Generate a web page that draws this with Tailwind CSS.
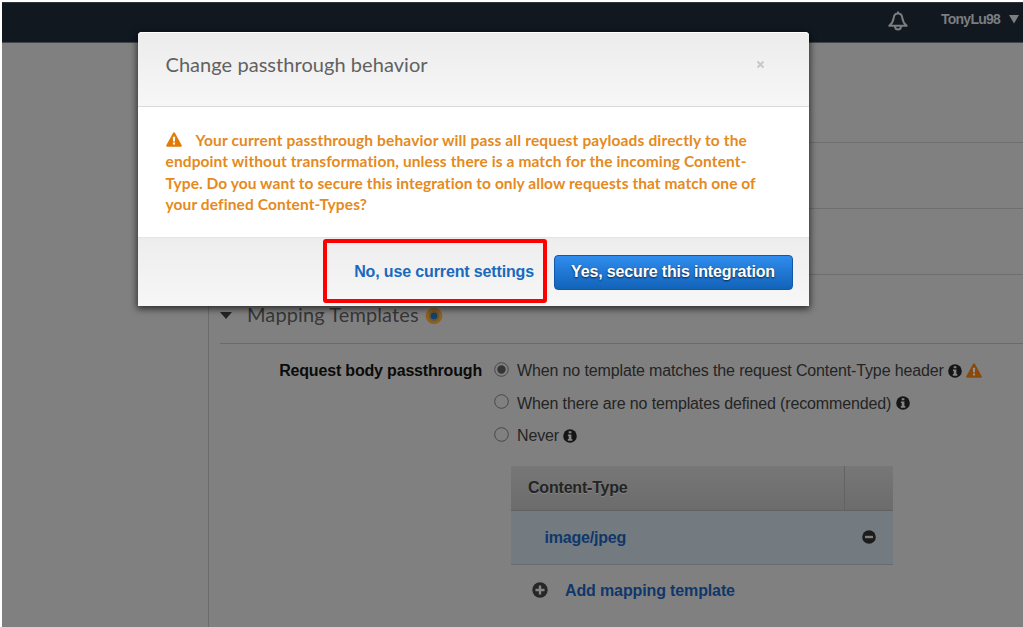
<!DOCTYPE html>
<html lang="en">
<head>
<meta charset="utf-8">
<title>Change passthrough behavior</title>
<script src="https://cdn.jsdelivr.net/npm/@tailwindcss/browser@4"></script>
</head>
<body class="w-[1023px] h-[627px] overflow-hidden bg-white font-['Liberation_Sans',sans-serif]">
<svg class="hidden">
  <symbol id="info" viewBox="0 0 14 14"><circle cx="7" cy="7" r="6.8" fill="#151515"/><path d="M5.7 2.2h2.7v2H5.7zM4.9 5.4h3.5v4.7h.9v1.6H4.8v-1.6h.9V7h-.8z" fill="#858585"/></symbol>
  <symbol id="warn" viewBox="0 0 16 15"><path d="M8 .3c.5 0 .8.3 1 .6l6.7 12.3c.4.7 0 1.5-.9 1.5H1.2c-.9 0-1.3-.8-.9-1.5L7 .9c.2-.3.5-.6 1-.6z" fill="currentColor"/><path d="M6.8 4.8h2.4l-.3 4.7H7.1zM6.9 10.5h2.2v2H6.9z" fill="var(--mark)"/></symbol>
</svg>
<div class="relative pt-[2px] pl-[2px] w-full h-full">
  <div class="flex flex-col h-full bg-[#808080]">
    <header class="h-[41px] shrink-0 bg-[#111820] border-t border-b border-t-[#30353b] border-b-[#41464c] flex items-start justify-end pr-[4px] text-[#7b7d80]">
      <svg class="w-[20px] h-[21px] mt-[8px] mr-[33px]" viewBox="0 0 20 21" fill="none" stroke="currentColor" stroke-width="2" stroke-linejoin="round"><path d="M10 2.5c-2.4 0-4 1.700-4.300 4.300C5.300 10.500 4.200 12.200 1.300 14.800h17.400c-2.900-2.600-4-4.300-4.400-8C14 4.200 12.400 2.500 10 2.500zM10 .5v2M7 15c0 2.200 1.200 3.500 3 3.500s3-1.300 3-3.500"/></svg>
      <span class="text-[14px] font-bold leading-[18px] mt-[7px] w-[59px] tracking-[-0.75px] whitespace-nowrap">TonyLu98</span>
      <svg class="w-[10px] h-[9px] mt-[12px] ml-[9px]" viewBox="0 0 10 9"><path d="M0 0h10L5 8.5z" fill="currentColor"/></svg>
    </header>
    <div class="flex flex-1 min-h-0">
      <aside class="w-[207px] shrink-0 border-r border-[#6c6c6c]"></aside>
      <main class="flex-1 min-w-0 pl-[11px]">
        <div class="h-[100px] border-b border-[#6e6e6e]"></div>
        <div class="h-[66px] border-b border-[#6e6e6e]"></div>
        <div class="h-[66px] border-b border-[#6e6e6e]"></div>
        <div class="h-[69px] border-b border-[#6a6a6a] flex items-start pt-[25px]">
          <svg class="w-[12px] h-[7px] mt-[12px]" viewBox="0 0 12 7"><path d="M0 0h12L6 7z" fill="#242424"/></svg>
          <h2 class="ml-[15px] w-[173px] text-[20px] leading-[28px] text-[#363636] font-['Lato',sans-serif] whitespace-nowrap tracking-[0.1px]">Mapping Templates</h2>
          <svg class="w-[18px] h-[18px] ml-[5px] mt-[7px]" viewBox="0 0 18 18"><circle cx="9" cy="9" r="8.3" fill="#8d601e"/><circle cx="9" cy="9" r="5.2" fill="#62583b"/><circle cx="9" cy="9" r="3.3" fill="#183f68"/></svg>
        </div>
        <div class="flex pt-[16px] text-base">
          <div class="w-[262px] text-right font-bold leading-[22px] text-[#0b0b0b] whitespace-nowrap shrink-0 tracking-[-0.18px]">Request body passthrough</div>
          <div class="ml-[12px] text-[#242424] whitespace-nowrap leading-[22px] tracking-[-0.13px]">
            <div class="flex h-[33px]"><svg class="w-[15px] h-[15px] mt-[2px] mr-[8px]" viewBox="0 0 15 15"><circle cx="7.5" cy="7.5" r="6.8" fill="none" stroke="#484848"/><circle cx="7.5" cy="7.5" r="4.2" fill="#353535"/></svg><span class="w-[427px]">When no template matches the request Content-Type header</span><svg class="w-[14px] h-[14px] mt-[4px] ml-[4px]"><use href="#info"/></svg><svg class="w-4 h-[15px] mt-[3px] ml-[4px] text-[#88490b] [--mark:#929292]"><use href="#warn"/></svg></div>
            <div class="flex h-[32px]"><svg class="w-[15px] h-[15px] mt-[1px] mr-[8px]" viewBox="0 0 15 15"><circle cx="7.5" cy="7.5" r="6.8" fill="none" stroke="#484848"/></svg><span class="w-[374px]">When there are no templates defined (recommended)</span><svg class="w-[14px] h-[14px] mt-[3px] ml-[4.5px]"><use href="#info"/></svg></div>
            <div class="flex h-[41px]"><svg class="w-[15px] h-[15px] mt-[2px] mr-[8px]" viewBox="0 0 15 15"><circle cx="7.5" cy="7.5" r="6.8" fill="none" stroke="#484848"/></svg><span class="w-[42px]">Never</span><svg class="w-[14px] h-[14px] mt-[4px] ml-[4px]"><use href="#info"/></svg></div>
            <div class="w-[382px] ml-[17px] font-bold">
              <div class="flex h-[45px] bg-linear-to-b from-[#777] to-[#6c6c6c] border-b border-[#616161] items-center text-[#242424] [text-shadow:0_1px_0_#858585]"><span class="w-[334px] h-full flex items-center pl-[17px] pb-[1px] border-r border-[#626262] tracking-[-0.2px]">Content-Type</span></div>
              <div class="flex h-[54px] bg-[#737a80] border-b border-[#666b70] items-center justify-between pl-[33.5px] pr-[17px] text-[#10376a]"><span class="tracking-[-0.2px]">image/jpeg</span><svg class="w-[14px] h-[14px] mb-[2px]" viewBox="0 0 14 14"><circle cx="7" cy="7" r="6.8" fill="#1c1c1c"/><path d="M3 5.8h8v2.4H3z" fill="#7b7f84"/></svg></div>
              <div class="flex h-[51px] items-center pl-[21px] text-[#10376a]"><svg class="w-4 h-4 mr-[17px] mb-px" viewBox="0 0 16 16"><circle cx="8" cy="8" r="7.7" fill="#262626"/><path d="M6.8 3.5h2.4v3.3h3.3v2.4H9.2v3.3H6.8V9.2H3.5V6.8h3.3z" fill="#858585"/></svg><span>Add mapping template</span></div>
            </div>
          </div>
        </div>
      </main>
    </div>
  </div>
  <section role="dialog" class="absolute left-[138px] top-[32px] w-[671px] h-[274px] rounded-t-[4px] bg-white shadow-[0_2px_7px_1px_rgba(0,0,0,0.65)] flex flex-col">
    <header class="h-[75px] rounded-t-[4px] bg-linear-to-b from-[#ececec] to-[#f7f7f7] border-t border-t-white border-b border-b-[#dadada] flex justify-between pl-[27.5px] pr-[44px]">
      <h1 class="font-['Lato',sans-serif] text-[20px] leading-[28px] mt-[17px] text-[#616161] whitespace-nowrap tracking-[0.05px]">Change passthrough behavior</h1>
      <svg class="w-[9px] h-[9px] mt-[27px]" viewBox="0 0 9 9"><path d="M1.5 1.5l6 6M7.5 1.5l-6 6" stroke="#c8c8c8" stroke-width="2"/></svg>
    </header>
    <div class="h-[130px] pt-[23px] pl-[27.5px] font-['Lato',sans-serif] font-bold text-[15.5px] leading-[21.33px] text-[#e58a20] whitespace-nowrap">
      <div class="flex"><svg class="w-4 h-[15px] mt-[2px] mr-[14px] text-[#e07b08] [--mark:white]"><use href="#warn"/></svg><span class="tracking-[0.15px]">Your current passthrough behavior will pass all request payloads directly to the</span></div>
      <div class="tracking-[0.11px]">endpoint without transformation, unless there is a match for the incoming Content-</div>
      <div class="tracking-[0.07px]">Type. Do you want to secure this integration to only allow requests that match one of</div>
      <div class="tracking-[0.11px]">your defined Content-Types?</div>
    </div>
    <footer class="flex-1 bg-linear-to-b from-[#ededed] to-[#f7f7f7] border-t border-[#e4e4e4] flex items-start justify-end pr-[16.5px] font-bold text-base whitespace-nowrap">
      <button class="w-[224px] h-[64px] mt-px mr-[6.5px] border-4 border-[#fe0000] rounded-[3px] text-[#1a69be] text-right pr-[9px] pt-[2px] tracking-[-0.14px]">No, use current settings</button>
      <button class="w-[239px] h-[35px] mt-[17px] rounded-[4px] border border-[#1258a8] bg-linear-to-b from-[#2f8ded] to-[#1263ba] text-white text-center pb-[1px] tracking-[-0.15px] [text-shadow:0_1px_2px_rgba(0,0,0,0.7)]">Yes, secure this integration</button>
    </footer>
  </section>
</div>
</body>
</html>
